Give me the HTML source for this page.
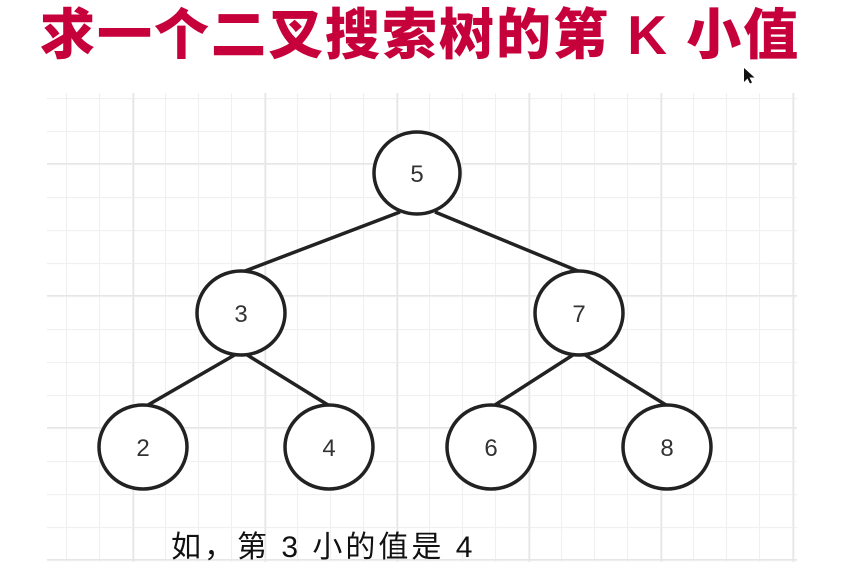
<!DOCTYPE html>
<html><head><meta charset="utf-8"><style>
body{margin:0;width:853px;height:587px;background:#fff;overflow:hidden;position:relative;font-family:"Liberation Sans","Noto Sans CJK SC",sans-serif}
.t{position:absolute;left:40px;top:-10px;font-size:55px;font-weight:900;color:#c5003b;letter-spacing:2px;white-space:nowrap;font-family:"Liberation Sans","Noto Sans CJK SC",sans-serif}
.c{position:absolute;left:171px;top:522px;font-size:30px;color:#111;letter-spacing:3px;white-space:nowrap}
svg{position:absolute;left:0;top:0}
</style></head><body>
<svg width="853" height="587">
<defs>
<pattern id="g" x="0" y="98" width="33" height="33" patternUnits="userSpaceOnUse">
<path d="M0 0.5H33M0.5 0V33" stroke="#f0f0f0" stroke-width="1.2" fill="none"/></pattern>
<pattern id="G" x="1" y="163" width="132" height="132" patternUnits="userSpaceOnUse">
<path d="M0 0.5H132M0.5 0V132" stroke="#e6e6e6" stroke-width="1.6" fill="none"/></pattern>
</defs>
<rect x="47" y="93" width="750" height="469" fill="url(#g)"/>
<rect x="47" y="93" width="750" height="469" fill="url(#G)"/>
<g stroke="#222" stroke-width="3.5" fill="none">
<line x1="400" y1="212" x2="245" y2="271"/><line x1="435" y1="212" x2="578" y2="271"/>
<line x1="238" y1="353" x2="148" y2="405"/><line x1="244" y1="353" x2="328" y2="405"/>
<line x1="576" y1="353" x2="495" y2="405"/><line x1="582" y1="353" x2="666" y2="405"/>
</g>
<g stroke="#222" stroke-width="3.5" fill="#fff">
<ellipse cx="417" cy="173" rx="43" ry="41"/>
<ellipse cx="241" cy="313" rx="44" ry="42"/><ellipse cx="579" cy="313" rx="44" ry="42"/>
<ellipse cx="143" cy="447" rx="44" ry="42"/><ellipse cx="329" cy="447" rx="44" ry="42"/>
<ellipse cx="491" cy="447" rx="44" ry="42"/><ellipse cx="667" cy="447" rx="44" ry="42"/>
</g>
<g font-family="Liberation Sans,sans-serif" font-size="24" fill="#333" text-anchor="middle">
<text x="417" y="182">5</text><text x="241" y="322">3</text><text x="579" y="322">7</text>
<text x="143" y="456">2</text><text x="329" y="456">4</text><text x="491" y="456">6</text><text x="667" y="456">8</text>
</g>
<path d="M744 68v14l3.5-3.5 2.5 5 2-1-2.5-5h5z" fill="#111"/>
</svg>
<div class="t">求一个二叉搜索树的第 K 小值</div>
<div class="c">如，第 3 小的值是 4</div>
</body></html>
